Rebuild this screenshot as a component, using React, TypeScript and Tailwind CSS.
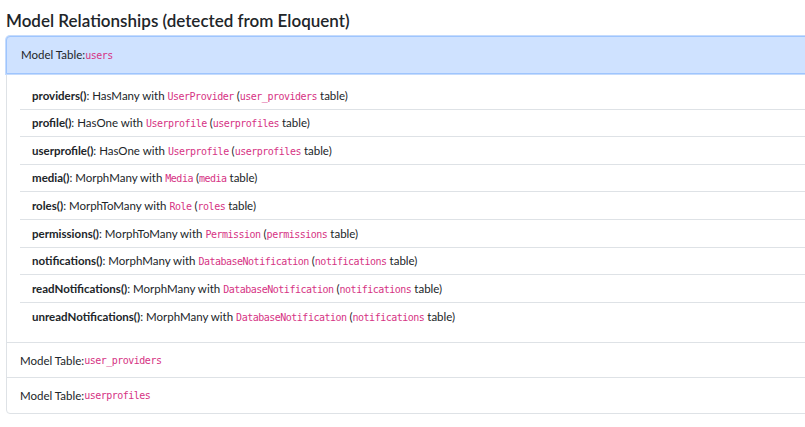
import React from 'react';

interface Relation {
  name: string;
  type: string;
  model: string;
  table: string;
}

const relations: Relation[] = [
  { name: 'providers', type: 'HasMany', model: 'UserProvider', table: 'user_providers' },
  { name: 'profile', type: 'HasOne', model: 'Userprofile', table: 'userprofiles' },
  { name: 'userprofile', type: 'HasOne', model: 'Userprofile', table: 'userprofiles' },
  { name: 'media', type: 'MorphMany', model: 'Media', table: 'media' },
  { name: 'roles', type: 'MorphToMany', model: 'Role', table: 'roles' },
  { name: 'permissions', type: 'MorphToMany', model: 'Permission', table: 'permissions' },
  { name: 'notifications', type: 'MorphMany', model: 'DatabaseNotification', table: 'notifications' },
  { name: 'readNotifications', type: 'MorphMany', model: 'DatabaseNotification', table: 'notifications' },
  { name: 'unreadNotifications', type: 'MorphMany', model: 'DatabaseNotification', table: 'notifications' },
];

function Code({ children }: { children: React.ReactNode }) {
  return (
    <code className="font-['DejaVu_Sans_Mono',monospace] text-[10px] tracking-[-0.5px] text-[#d63384]">
      {children}
    </code>
  );
}

export default function App() {
  return (
    <div className="w-[805px] h-[427px] overflow-hidden bg-white font-['Lato',sans-serif] text-[#212529]">
      <h2 className="pl-[6px] pt-[9px] text-[17px] font-semibold leading-[24px]">
        Model Relationships (detected from Eloquent)
      </h2>

      <div className="ml-[6px] mt-[3px] w-[830px] rounded-[4px] border border-[#dee2e6] text-[11.5px]">
        <div className="-m-px h-[38px] rounded-t-[4px] border border-[#9ec5fe] bg-[#cfe2ff] px-[14px] flex items-center shadow-[0_0_0_1px_#c5dbfc]">
          Model Table:<Code>users</Code>
        </div>

        <ul className="pl-[13px] pt-[9px] pb-[12px] border-b border-[#dee2e6]">
          {relations.map((r, i) => (
            <li
              key={r.name}
              className={
                'h-[27.6px] flex items-center pl-[12px] ' +
                (i < relations.length - 1 ? 'border-b border-[#dee2e6]' : '')
              }
            >
              <span className="whitespace-pre">
                <b className="font-bold">{r.name}()</b>: {r.type} with <Code>{r.model}</Code> (
                <Code>{r.table}</Code> table)
              </span>
            </li>
          ))}
        </ul>

        <div className="h-[35px] px-[13px] flex items-center border-b border-[#dee2e6]">
          Model Table:<Code>user_providers</Code>
        </div>
        <div className="h-[35px] px-[13px] flex items-center">
          Model Table:<Code>userprofiles</Code>
        </div>
      </div>
    </div>
  );
}
